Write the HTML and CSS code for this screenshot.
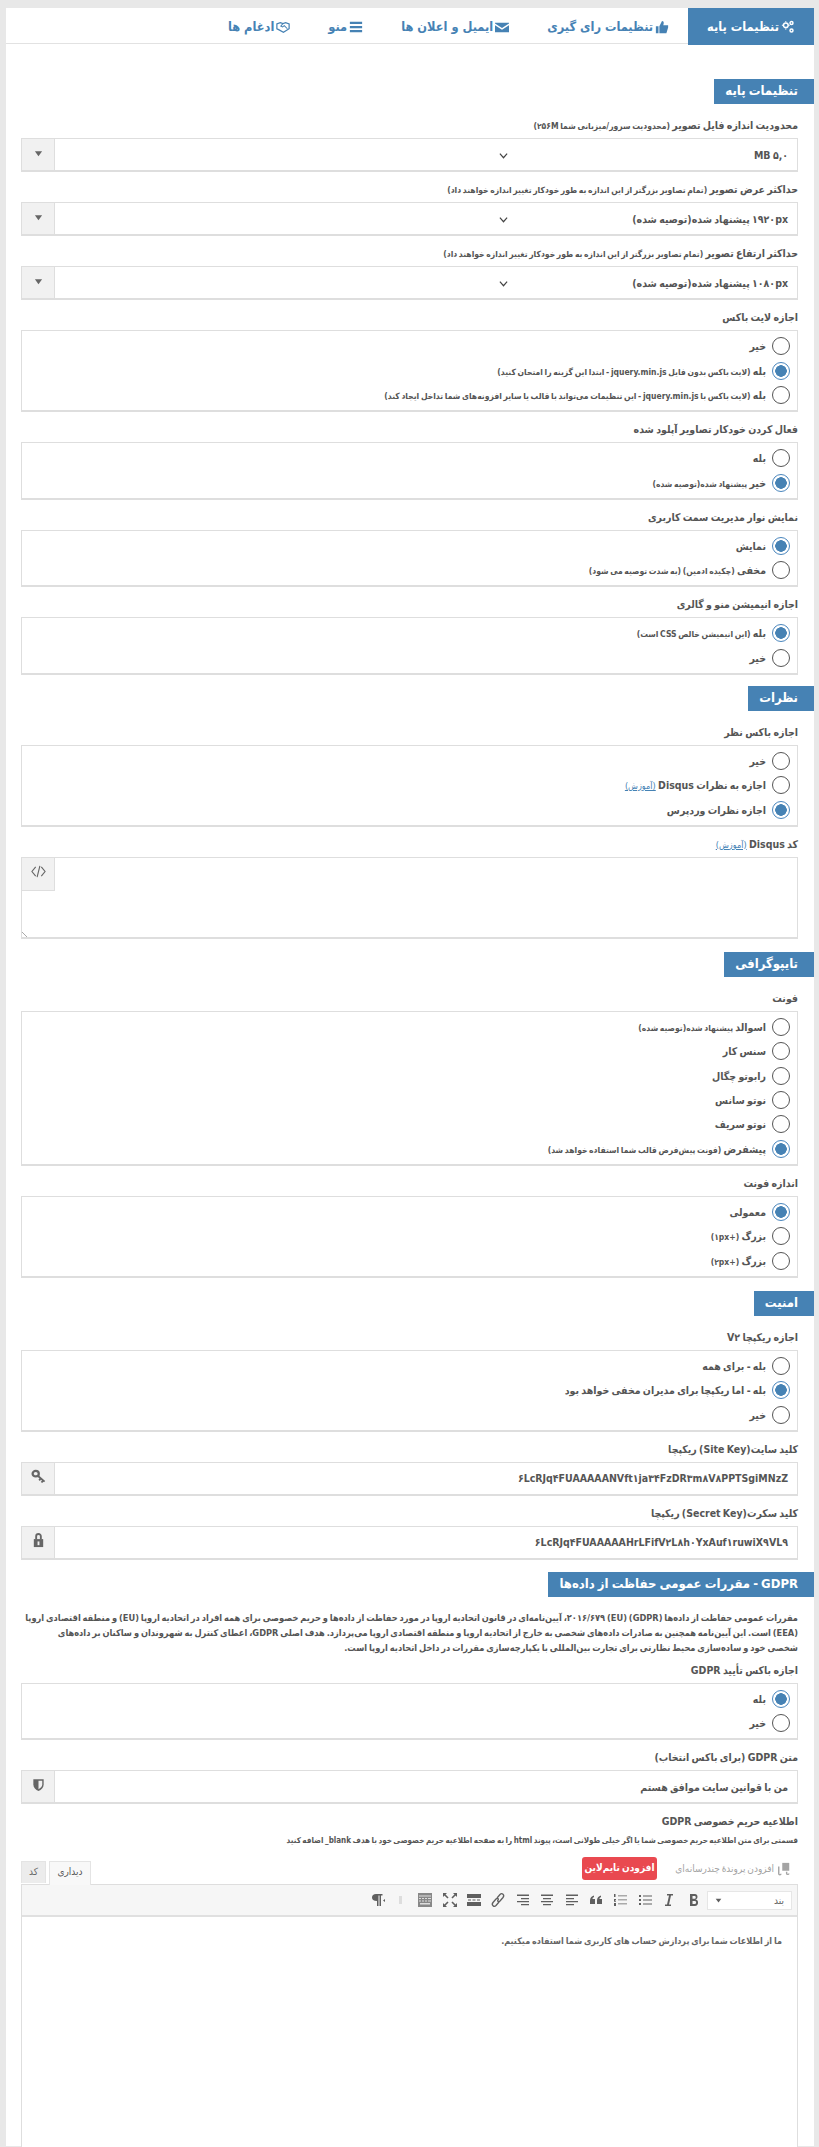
FILE: index.html
```html
<!DOCTYPE html>
<html lang="fa" dir="rtl">
<head>
<meta charset="utf-8">
<title>تنظیمات پایه</title>
<link rel="stylesheet" href="styles.css">
</head>
<body>
<svg class="defs" width="0" height="0" aria-hidden="true">
  <symbol id="i-code" viewBox="0 0 16 16"><path d="M5 3 1 8l4 5M11 3l4 5-4 5M9.500 2 6.500 14" fill="none" stroke="currentColor" stroke-width="1.200"/></symbol>
  <symbol id="i-caret" viewBox="0 0 10 10"><path d="M1 2.500h8L5 8z" fill="currentColor"/></symbol>
  <symbol id="i-chev" viewBox="0 0 10 10"><path d="M1 3l4 4.500L9 3" fill="none" stroke="currentColor" stroke-width="1.300"/></symbol>
  <symbol id="i-key" viewBox="0 0 16 16"><ellipse cx="5" cy="5" rx="3.300" ry="2.900" fill="none" stroke="currentColor" stroke-width="2.400"/><path d="M7.500 7.500l7 6M10.500 10l-1.800 2.200M13 12.200l-1.800 2.200" fill="none" stroke="currentColor" stroke-width="2"/></symbol>
  <symbol id="i-lock" viewBox="0 0 16 16"><path d="M5.500 7V3.500a2.500 2.500 0 0 1 5 0V7" fill="none" stroke="currentColor" stroke-width="2"/><path d="M3 6.500h10V15H3z" fill="currentColor"/><path d="M7 9h2v4H7z" fill="#f0f0f0"/></symbol>
  <symbol id="i-shield" viewBox="0 0 16 16"><path d="M2.500 2.500h11V8c0 3.500-2.500 5.500-5.500 7-3-1.500-5.500-3.500-5.500-7z" fill="currentColor"/><path d="M8 4h4v4c0 2.500-2 3.800-4 5z" fill="#f0f0f0"/></symbol>
  <symbol id="i-cogs" viewBox="0 0 16 16"><g fill="none" stroke="currentColor" stroke-width="1.700"><circle cx="5.500" cy="6" r="2.700"/><circle cx="12" cy="3.500" r="1.700"/><circle cx="12" cy="12" r="1.700"/></g><path d="M5 1h1v1.500H5zM5 9.500h1V11H5zM1 5.500h1.500v1H1zM8.500 5.500H10v1H8.500z" fill="currentColor"/></symbol>
  <symbol id="i-thumb" viewBox="0 0 16 16"><path d="M1 7h3v8H1zM5 7l3-6c1.500 0 2 1 2 2.500L9.500 6H15v2.500L13 15H5z" fill="currentColor"/></symbol>
  <symbol id="i-mail" viewBox="0 0 16 16"><path d="M0 3h16v1L8 9 0 4zM0 6l8 5 8-5v8H0z" fill="currentColor"/></symbol>
  <symbol id="i-bars" viewBox="0 0 16 16"><path d="M1 2h14v2.500H1zM1 6.800h14v2.500H1zM1 11.500h14V14H1z" fill="currentColor"/></symbol>
  <symbol id="i-hands" viewBox="0 0 16 16"><path d="M1 4.500 5 3l3 1 3-1 4 1.500V10l-6.500 4L3 11l-2-1z" fill="none" stroke="currentColor" stroke-width="1.400"/><path d="M8 4 5.500 7l2 1 2-1.500L13 10" fill="none" stroke="currentColor" stroke-width="1.200"/></symbol>
  <symbol id="i-media" viewBox="0 0 16 16"><path d="M6 1h8v9H6z" fill="currentColor"/><path d="M2 5v8.500c0 1.500 2.500 1.500 2.500 0M11 11v2c0 1.500 2.500 1.500 2.500 0" fill="none" stroke="currentColor" stroke-width="1.600"/></symbol>
</svg>

<main class="panel">
  <nav class="tabs">
    <a class="tab active"><svg class="ti"><use href="#i-cogs"/></svg>تنظیمات پایه</a>
    <a class="tab"><svg class="ti"><use href="#i-thumb"/></svg>تنظیمات رای گیری</a>
    <a class="tab"><svg class="ti"><use href="#i-mail"/></svg>ایمیل و اعلان ها</a>
    <a class="tab"><svg class="ti"><use href="#i-bars"/></svg>منو</a>
    <a class="tab"><svg class="ti"><use href="#i-hands"/></svg>ادغام ها</a>
  </nav>

  <section class="content">
    <h2 class="sec first">تنظیمات پایه</h2>

    <div class="field">
      <div class="lab">محدودیت اندازه فایل تصویر <small>(محدودیت سرور/میزبانی شما ۲۵۶M)</small></div>
      <div class="ctl">
        <span class="add"><svg class="caret"><use href="#i-caret"/></svg></span>
        <div class="val sel"><span class="sv">۵,۰ MB</span><svg class="chev"><use href="#i-chev"/></svg></div>
      </div>
    </div>
    <div class="field">
      <div class="lab">حداکثر عرض تصویر <small>(تمام تصاویر بزرگتر از این اندازه به طور خودکار تغییر اندازه خواهند داد)</small></div>
      <div class="ctl">
        <span class="add"><svg class="caret"><use href="#i-caret"/></svg></span>
        <div class="val sel"><span class="sv">۱۹۲۰px پیشنهاد شده(توصیه شده)</span><svg class="chev"><use href="#i-chev"/></svg></div>
      </div>
    </div>
    <div class="field">
      <div class="lab">حداکثر ارتفاع تصویر <small>(تمام تصاویر بزرگتر از این اندازه به طور خودکار تغییر اندازه خواهند داد)</small></div>
      <div class="ctl">
        <span class="add"><svg class="caret"><use href="#i-caret"/></svg></span>
        <div class="val sel"><span class="sv">۱۰۸۰px پیشنهاد شده(توصیه شده)</span><svg class="chev"><use href="#i-chev"/></svg></div>
      </div>
    </div>

    <div class="field">
      <div class="lab">اجازه لایت باکس</div>
      <div class="box">
        <div class="opt"><i class="r"></i><span>خیر</span></div>
        <div class="opt"><i class="r on"></i><span>بله <small>(لایت باکس بدون فایل jquery.min.js - ابتدا این گزینه را امتحان کنید)</small></span></div>
        <div class="opt"><i class="r"></i><span>بله <small>(لایت باکس با jquery.min.js - این تنظیمات می‌تواند با قالب یا سایر افزونه‌های شما تداخل ایجاد کند)</small></span></div>
      </div>
    </div>
    <div class="field">
      <div class="lab">فعال کردن خودکار تصاویر آپلود شده</div>
      <div class="box">
        <div class="opt"><i class="r"></i><span>بله</span></div>
        <div class="opt"><i class="r on"></i><span>خیر <small>پیشنهاد شده(توصیه شده)</small></span></div>
      </div>
    </div>
    <div class="field">
      <div class="lab">نمایش نوار مدیریت سمت کاربری</div>
      <div class="box">
        <div class="opt"><i class="r on"></i><span>نمایش</span></div>
        <div class="opt"><i class="r"></i><span>مخفی <small>(چکیده ادمین) (به شدت توصیه می شود)</small></span></div>
      </div>
    </div>
    <div class="field">
      <div class="lab">اجازه انیمیشن منو و گالری</div>
      <div class="box">
        <div class="opt"><i class="r on"></i><span>بله <small>(این انیمیشن خالص CSS است)</small></span></div>
        <div class="opt"><i class="r"></i><span>خیر</span></div>
      </div>
    </div>

    <h2 class="sec">نظرات</h2>
    <div class="field">
      <div class="lab">اجازه باکس نظر</div>
      <div class="box">
        <div class="opt"><i class="r"></i><span>خیر</span></div>
        <div class="opt"><i class="r"></i><span>اجازه به نظرات Disqus <a class="lnk">(آموزش)</a></span></div>
        <div class="opt"><i class="r on"></i><span>اجازه نظرات وردپرس</span></div>
      </div>
    </div>
    <div class="field">
      <div class="lab">کد Disqus <a class="lnk">(آموزش)</a></div>
      <div class="area">
        <span class="add code"><svg class="ai"><use href="#i-code"/></svg></span>
        <i class="grip"></i>
      </div>
    </div>

    <h2 class="sec narrow">تایپوگرافی</h2>
    <div class="field">
      <div class="lab">فونت</div>
      <div class="box">
        <div class="opt"><i class="r"></i><span>اسوالد <small>پیشنهاد شده(توصیه شده)</small></span></div>
        <div class="opt"><i class="r"></i><span>سنس کار</span></div>
        <div class="opt"><i class="r"></i><span>رابوتو چگال</span></div>
        <div class="opt"><i class="r"></i><span>نوتو سانس</span></div>
        <div class="opt"><i class="r"></i><span>نوتو سریف</span></div>
        <div class="opt"><i class="r on"></i><span>پیشفرض <small>(فونت پیش‌فرض قالب شما استفاده خواهد شد)</small></span></div>
      </div>
    </div>
    <div class="field">
      <div class="lab">اندازه فونت</div>
      <div class="box">
        <div class="opt"><i class="r on"></i><span>معمولی</span></div>
        <div class="opt"><i class="r"></i><span>بزرگ <small>(+۱px)</small></span></div>
        <div class="opt"><i class="r"></i><span>بزرگ <small>(+۲px)</small></span></div>
      </div>
    </div>

    <h2 class="sec sec-sec">امنیت</h2>
    <div class="field">
      <div class="lab">اجازه ریکپچا V۲</div>
      <div class="box">
        <div class="opt"><i class="r"></i><span>بله - برای همه</span></div>
        <div class="opt"><i class="r on"></i><span>بله - اما ریکپچا برای مدیران مخفی خواهد بود</span></div>
        <div class="opt"><i class="r"></i><span>خیر</span></div>
      </div>
    </div>
    <div class="field">
      <div class="lab">کلید سایت(Site Key) ریکپچا</div>
      <div class="ctl">
        <span class="add"><svg class="ai"><use href="#i-key"/></svg></span>
        <div class="val">۶LcRJq۴FUAAAAANVft۱ja۳۴FzDR۳m۸V۸PPTSgiMNzZ</div>
      </div>
    </div>
    <div class="field">
      <div class="lab">کلید سکرت(Secret Key) ریکپچا</div>
      <div class="ctl">
        <span class="add"><svg class="ai"><use href="#i-lock"/></svg></span>
        <div class="val">۶LcRJq۴FUAAAAAHrLFifV۲L۸h۰YxAuf۱ruwiX۹VL۹</div>
      </div>
    </div>

    <h2 class="sec sec-gdpr">GDPR - مقررات عمومی حفاظت از داده‌ها</h2>
    <p class="para">مقررات عمومی حفاظت از داده‌ها (GDPR) (EU) ۲۰۱۶/۶۷۹، آیین‌نامه‌ای در قانون اتحادیه اروپا در مورد حفاظت از داده‌ها و حریم خصوصی برای همه افراد در اتحادیه اروپا (EU) و منطقه اقتصادی اروپا<br>(EEA) است. این آیین‌نامه همچنین به صادرات داده‌های شخصی به خارج از اتحادیه اروپا و منطقه اقتصادی اروپا می‌پردازد. هدف اصلی GDPR، اعطای کنترل به شهروندان و ساکنان بر داده‌های<br>شخصی خود و ساده‌سازی محیط نظارتی برای تجارت بین‌المللی با یکپارچه‌سازی مقررات در داخل اتحادیه اروپا است.</p>
    <div class="field">
      <div class="lab">اجازه باکس تأیید GDPR</div>
      <div class="box">
        <div class="opt"><i class="r on"></i><span>بله</span></div>
        <div class="opt"><i class="r"></i><span>خیر</span></div>
      </div>
    </div>
    <div class="field">
      <div class="lab">متن GDPR (برای باکس انتخاب)</div>
      <div class="ctl">
        <span class="add"><svg class="ai"><use href="#i-shield"/></svg></span>
        <div class="val">من با قوانین سایت موافق هستم</div>
      </div>
    </div>
    <div class="field">
      <div class="lab">اطلاعیه حریم خصوصی GDPR</div>
      <div class="hint">قسمتی برای متن اطلاعیه حریم خصوصی شما یا اگر خیلی طولانی است، پیوند html را به صفحه اطلاعیه حریم خصوصی خود با هدف blank_ اضافه کنید</div>
      <div class="wp-top">
        <div class="media">
          <span class="media-btn"><svg class="mi"><use href="#i-media"/></svg>افزودن پروندهٔ چندرسانه‌ای</span>
          <span class="red">افزودن تایم‌لاین</span>
        </div>
        <div class="modes">
          <span class="mode cur">دیداری</span>
          <span class="mode">کد</span>
        </div>
      </div>
      <div class="editor">
        <div class="bar">
          <div class="fmt"><span>بند</span><svg class="caret s"><use href="#i-caret"/></svg></div>
          <svg class="tb" viewBox="0 0 16 16"><path d="M4 2h5c3 0 3.500 5 .5 5.500 3.500 0 3.500 6.500-.5 6.500H4zM6.500 4v2.800H9c1 0 1-2.800 0-2.800zM6.500 9v3H9c1.500 0 1.500-3 0-3z" fill="currentColor"/></svg>
          <svg class="tb" viewBox="0 0 16 16"><path d="M6 2h6v1.500h-2L8 12.500h2V14H4v-1.500h2L8 3.500H6z" fill="currentColor"/></svg>
          <svg class="tb" viewBox="0 0 16 16"><path d="M2 3h2v2H2zM2 7h2v2H2zM2 11h2v2H2zM6 3.500h9v1H6zM6 7.500h9v1H6zM6 11.500h9v1H6z" fill="currentColor"/></svg>
          <svg class="tb" viewBox="0 0 16 16"><path d="M2 2h1.500v3H2zM2 7h2v.8L3 9h1v.8H2zM2 11h2v3H2zM6 3.500h9v.8H6zM6 7.500h9v.8H6zM6 11.500h9v.8H6z" fill="currentColor"/></svg>
          <svg class="tb" viewBox="0 0 16 16"><path d="M2 12V8.500C2 6 3.500 4 6 3.500V5c-1 .5-1.500 1-1.500 2H7v5zM9 12V8.500C9 6 10.500 4 13 3.500V5c-1 .5-1.500 1-1.500 2H14v5z" fill="currentColor"/></svg>
          <svg class="tb" viewBox="0 0 16 16"><path d="M2 2.500h12V4H2zM2 6h8v1.200H2zM2 9h12v1.200H2zM2 12h8v1.200H2z" fill="currentColor"/></svg>
          <svg class="tb" viewBox="0 0 16 16"><path d="M2 2.500h12V4H2zM4 6h8v1.200H4zM2 9h12v1.200H2zM4 12h8v1.200H4z" fill="currentColor"/></svg>
          <svg class="tb" viewBox="0 0 16 16"><path d="M2 2.500h12V4H2zM6 6h8v1.200H6zM2 9h12v1.200H2zM6 12h8v1.200H6z" fill="currentColor"/></svg>
          <svg class="tb" viewBox="0 0 16 16"><path d="M7 6l3-3.500c2-2 5 .5 3 3L10 9c-1.500 1.500-3 0-2-1M9 10l-3 3.500c-2 2-5-.5-3-3L6 7c1.500-1.500 3 0 2 1" fill="none" stroke="currentColor" stroke-width="1.300"/></svg>
          <svg class="tb" viewBox="0 0 16 16"><path d="M1 2h14v4H1zM1 10h14v4H1zM2 7.500h3v1H2zM6.500 7.500h3v1h-3zM11 7.500h3v1h-3z" fill="currentColor"/></svg>
          <svg class="tb" viewBox="0 0 16 16"><path d="M2 2l4 4M14 2l-4 4M2 14l4-4M14 14l-4-4" stroke="currentColor" stroke-width="1.600"/><path d="M1 1h4L1 5zM15 1h-4l4 4zM1 15h4l-4-4zM15 15h-4l4-4z" fill="currentColor"/></svg>
          <svg class="tb" viewBox="0 0 16 16"><path d="M1 1h14v14H1z" fill="#888"/><path d="M2 3.500h12v1H2zM2 6h2v1H2zM5 6h2v1H5zM8 6h2v1H8zM11 6h3v1h-3zM2 8.500h2v1H2zM5 8.500h2v1H5zM8 8.500h2v1H8zM11 8.500h3v1h-3zM3 11h10v1.500H3z" fill="#ddd"/></svg>
          <i class="sep"></i>
          <svg class="tb" viewBox="0 0 16 16"><path d="M7 2h6.500v1.500H12V14h-1.500V3.500H9.500V14H8V9C4.500 9 3 7.500 3 5.500S4.500 2 7 2z" fill="currentColor"/><path d="M16 7l-2 1.500 2 1.500z" fill="currentColor"/></svg>
        </div>
        <div class="doc"><p>ما از اطلاعات شما برای پردازش حساب های کاربری شما استفاده میکنیم.</p></div>
      </div>
    </div>
  </section>
</main>
</body>
</html>
```
FILE: styles.css
```css
* { box-sizing: border-box; }
html, body { margin: 0; height: 2147px; overflow: hidden; }
body {
  background: #e8e8e8;
  padding: 9px 5px 0 6px;
  font-family: "DejaVu Sans Condensed", "DejaVu Sans", sans-serif;
  font-size: 10px;
  word-spacing: -1px;
  color: #555;
}
.defs { position: absolute; }
.panel { background: #fff; height: 2138px; }

.tabs { display: flex; height: 36px; border-bottom: 1px solid #e2e2e2; margin-top: -1px; }
.tab {
  display: flex; align-items: center; gap: 2px;
  padding: 0 19px; height: 37px;
  color: #4682b4; font-weight: bold; font-size: 12.700px;
  word-spacing: 0;
  white-space: nowrap;
}
.tab.active { background: #4682b4; color: #fff; }
.ti { width: 14px; height: 14px; flex: none; }

.content { padding: 35px 16px 0 15px; }
.sec {
  width: fit-content;
  margin: 11px -16px 13px 0;
  height: 25px; line-height: 23px;
  padding: 0 16px 0 11px;
  background: #4682b4; color: #fff;
  font-size: 13px; font-weight: bold;
}
.sec.first { margin-top: 0; }
.sec.narrow { letter-spacing: -1px; margin-top: 13px; }
.sec.sec-sec { margin-top: 13px; }
.sec.sec-gdpr { margin-top: 12px; }

.field { margin-bottom: 9px; }
.lab {
  height: 16px; line-height: 16px; margin-bottom: 5px;
  font-size: 10.500px; font-weight: bold; color: #555;
  white-space: nowrap;
}
small { font-size: 8.500px; font-weight: bold; }
.lnk { color: #4682b4; font-weight: normal; text-decoration: underline; font-size: 9px; }

.ctl {
  display: flex; flex-direction: row-reverse;
  height: 34px;
  border: 1px solid #dedede; border-bottom-width: 2px;
  background: #fff;
}
.add {
  flex: none; width: 33px; height: 100%;
  display: flex; align-items: flex-start; justify-content: center;
  background: #f1f1f1; border-right: 1px solid #dedede;
  color: #666;
}
.caret { width: 9px; height: 9px; margin-top: 10px; }
.ai { width: 15px; height: 15px; margin-top: 6px; }
.val {
  flex: 1; display: flex; align-items: center;
  padding: 0 9px; font-size: 10.500px; font-weight: bold; color: #555;
  white-space: nowrap;
}
.sv { width: 280px; flex: none; }
.chev { width: 9px; height: 9px; margin-top: 2px; color: #444; }

.box {
  padding: 3px 7px 2.800px 0;
  border: 1px solid #dedede; border-bottom-width: 2px;
  background: #fff;
}
.opt {
  display: flex; align-items: center; gap: 6px;
  height: 24.400px;
  font-size: 10.500px; font-weight: bold; color: #555;
  white-space: nowrap;
}
.r {
  flex: none; width: 18px; height: 18px;
  border: 1.500px solid #555; border-radius: 50%;
  background: #fff;
}
.r.on {
  border-color: #4a86bd;
  background: radial-gradient(circle, #4682b4 0 5.500px, #fff 6px);
}

.area {
  position: relative; height: 82px;
  border: 1px solid #dedede; border-bottom-width: 2px;
}
.add.code {
  position: absolute; left: 0; top: 0; height: 33px;
  border-bottom: 1px solid #dedede;
}
.grip {
  position: absolute; left: 0; bottom: 0; width: 5px; height: 5px;
  background: linear-gradient(45deg, transparent 40%, #aaa 40% 55%, transparent 55%);
}

.para {
  margin: 0 0 7px; font-size: 9.200px; font-weight: bold; line-height: 15px;
  color: #555; white-space: nowrap;
}
.hint { font-size: 8px; font-weight: bold; color: #555; white-space: nowrap; height: 14px; line-height: 14px; }

.wp-top { display: flex; justify-content: space-between; align-items: flex-end; height: 36px; padding: 0 7px 0 0; }
.media { display: flex; align-items: center; gap: 10px; align-self: flex-start; padding-top: 9px; }
.media-btn { display: flex; align-items: center; gap: 3px; width: 124px; color: #a4a4a4; font-size: 10px; white-space: nowrap; }
.mi { width: 14px; height: 14px; flex: none; }
.red {
  display: block; width: 75px; height: 23px; line-height: 22px; text-align: center;
  background: #e94950; color: #fff; border-radius: 3px; font-size: 10px; font-weight: bold; white-space: nowrap;
}
.modes { display: flex; gap: 3px; height: 23px; }
.mode {
  width: 25px; height: 22px; line-height: 20px; text-align: center;
  background: #ececec; border: 1px solid #e4e4e4; border-bottom: 0;
  font-size: 10px; color: #666;
}
.mode.cur { width: 42px; height: 24px; background: #f8f8f8; position: relative; z-index: 1; color: #555; }

.editor { border: 1px solid #dedede; height: 400px; background: #fff; }
.bar {
  display: flex; align-items: center; gap: 8.400px;
  height: 32px; padding: 0 5px 0 0;
  background: #f6f6f6; border-bottom: 2px solid #e0e0e0;
  color: #5f5f5f;
}
.fmt {
  width: 85px; height: 19px; margin-left: -3px;
  display: flex; justify-content: space-between; align-items: center;
  padding: 0 7px; background: #fff; border: 1px solid #e6e6e6; font-size: 10px;
}
.caret.s { width: 7px; height: 7px; margin: 0; }
.tb { width: 16px; height: 16px; flex: none; }
.sep { width: 16px; height: 8px; flex: none; background: linear-gradient(#ddd,#ddd) center / 3px 8px no-repeat; }
.doc { padding: 18px 15px; font-size: 9px; font-weight: bold; color: #666; line-height: 12px; }
.doc p { margin: 0; }
```
